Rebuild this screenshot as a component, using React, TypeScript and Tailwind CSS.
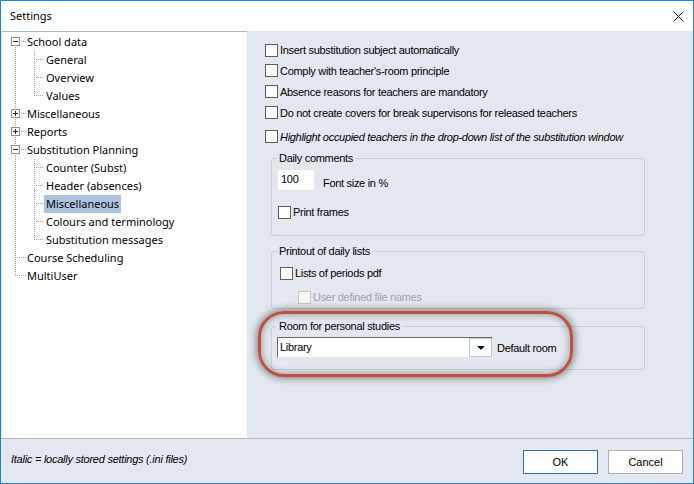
import React from "react";

type Row =
  | { kind: "root"; label: string; box?: "plus" | "minus"; first?: boolean; last?: boolean }
  | { kind: "child"; label: string; lastChild?: boolean; selected?: boolean };

const rows: Row[] = [
  { kind: "root", label: "School data", box: "minus", first: true },
  { kind: "child", label: "General" },
  { kind: "child", label: "Overview" },
  { kind: "child", label: "Values", lastChild: true },
  { kind: "root", label: "Miscellaneous", box: "plus" },
  { kind: "root", label: "Reports", box: "plus" },
  { kind: "root", label: "Substitution Planning", box: "minus" },
  { kind: "child", label: "Counter (Subst)" },
  { kind: "child", label: "Header (absences)" },
  { kind: "child", label: "Miscellaneous", selected: true },
  { kind: "child", label: "Colours and terminology" },
  { kind: "child", label: "Substitution messages", lastChild: true },
  { kind: "root", label: "Course Scheduling" },
  { kind: "root", label: "MultiUser", last: true },
];

const DOT = "#a0a0a0";

function VLine({ x, y1, y2 }: { x: number; y1: number; y2: number }) {
  return (
    <line x1={x} y1={y1} x2={x} y2={y2} stroke={DOT} strokeWidth={1} strokeDasharray="1 1" shapeRendering="crispEdges" />
  );
}
function HLine({ x1, x2, y }: { x1: number; x2: number; y: number }) {
  return (
    <line x1={x1} y1={y} x2={x2} y2={y} stroke={DOT} strokeWidth={1} strokeDasharray="1 1" shapeRendering="crispEdges" />
  );
}

function Gutter({ row }: { row: Row }) {
  if (row.kind === "child") {
    return (
      <svg width={42} height={18} className="shrink-0">
        <VLine x={13.5} y1={0} y2={18} />
        <VLine x={32.5} y1={0} y2={row.lastChild ? 9 : 18} />
        <HLine x1={34} x2={42} y={8.5} />
      </svg>
    );
  }
  if (row.box) {
    return (
      <svg width={24} height={18} className="shrink-0">
        {!row.first && <VLine x={13.5} y1={0} y2={4} />}
        <VLine x={13.5} y1={14} y2={18} />
        <rect x={9.5} y={4.5} width={8} height={8} fill="#ffffff" stroke="#919191" strokeWidth={1} shapeRendering="crispEdges" />
        <line x1={11} y1={8.5} x2={16} y2={8.5} stroke="#2b2b2b" strokeWidth={1} shapeRendering="crispEdges" />
        {row.box === "plus" && (
          <line x1={13.5} y1={6} x2={13.5} y2={11} stroke="#2b2b2b" strokeWidth={1} shapeRendering="crispEdges" />
        )}
        <HLine x1={19} x2={24} y={8.5} />
      </svg>
    );
  }
  return (
    <svg width={24} height={18} className="shrink-0">
      <VLine x={13.5} y1={0} y2={row.last ? 9 : 18} />
      <HLine x1={15} x2={24} y={8.5} />
    </svg>
  );
}

function Tree() {
  return (
    <div className="ml-[1px] w-[245px] bg-white border-t border-[#a9bbd1] pt-[1px] font-['Noto_Sans',sans-serif] text-[11px] text-black">
      {rows.map((r, i) => (
        <div key={i} className="flex h-[18px] items-center leading-[18px]">
          <Gutter row={r} />
          {r.kind === "child" ? (
            <span className={"px-[2px] whitespace-nowrap " + (r.selected ? "bg-[#adc3df]" : "")}>{r.label}</span>
          ) : (
            <span className="ml-[1px] whitespace-nowrap">{r.label}</span>
          )}
        </div>
      ))}
    </div>
  );
}

function Box({ disabled }: { disabled?: boolean }) {
  return (
    <span
      className={
        "inline-block w-[13px] h-[13px] shrink-0 border " +
        (disabled ? "border-[#c4c4c4] bg-[#f7f7f7]" : "border-[#5c5c5c] bg-white")
      }
    />
  );
}

function Check({ label, italic, disabled, className }: { label: string; italic?: boolean; disabled?: boolean; className?: string }) {
  return (
    <div className={"flex items-center gap-[2px] " + (className ?? "")}>
      <Box disabled={disabled} />
      <span className={"whitespace-nowrap leading-[14px] " + (italic ? "italic " : "") + (disabled ? "text-[#a2a2a2]" : "text-black")}>
        {label}
      </span>
    </div>
  );
}

function Group({ title, className, children }: { title: string; className?: string; children?: React.ReactNode }) {
  return (
    <div className={"relative ml-[24px] w-[374px] border border-[#c8ced8] rounded-[3px] " + (className ?? "")}>
      <span className="absolute -top-[7px] left-[5px] px-[2px] bg-[#e3e8f0] leading-[13px] whitespace-nowrap text-black">
        {title}
      </span>
      {children}
    </div>
  );
}

function RightPanel() {
  return (
    <div className="relative flex-1 flex flex-col pt-[9px] font-['Liberation_Sans',Arial,sans-serif] text-[11px] tracking-[-0.3px] text-black">
      <Check className="h-[20px] pl-[18px]" label="Insert substitution subject automatically" />
      <Check className="h-[21px] pl-[18px]" label="Comply with teacher's-room principle" />
      <Check className="h-[21px] pl-[18px]" label="Absence reasons for teachers are mandatory" />
      <Check className="h-[21px] pl-[18px]" label="Do not create covers for break supervisons for released teachers" />
      <Check className="h-[21px] pl-[18px] mt-[3px]" label="Highlight occupied teachers in the drop-down list of the substitution window" italic />

      <Group title="Daily comments" className="mt-[11px] h-[78px] pt-[10px] pl-[5px]">
        <div className="flex items-start">
          <div className="w-[38px] h-[22px] bg-white border border-[#e2e5ea] pl-[3px] pt-[2px] leading-[14px]">100</div>
          <span className="ml-[8px] mt-[7px] leading-[14px]">Font size in %</span>
        </div>
        <Check className="mt-[14px] ml-[1px]" label="Print frames" />
      </Group>

      <Group title="Printout of daily lists" className="mt-[15px] h-[58px] pt-[14px] pl-[8px]">
        <Check label="Lists of periods pdf" />
        <Check className="mt-[10px] ml-[18px]" label="User defined file names" disabled />
      </Group>

      <Group title="Room for personal studies" className="mt-[17px] h-[44px] pt-[10px] pl-[5px]">
        <div className="flex items-center">
          <div className="flex w-[216px] h-[21px] bg-white border-t border-l border-[#6a6a6a] border-r border-b border-r-[#e8e8e8] border-b-[#e8e8e8]">
            <span className="flex-1 pl-[2px] leading-[18px]">Library</span>
            <div className="w-[23px] h-full border border-[#b8c5da] bg-white flex items-center justify-center">
              <svg width={8} height={4}>
                <polygon points="0,0 8,0 4,4" fill="#111" />
              </svg>
            </div>
          </div>
          <span className="ml-[4px] leading-[14px]">Default room</span>
        </div>
      </Group>

      <div className="pointer-events-none absolute left-[11px] top-[280px] w-[315px] h-[66px] rounded-[26px] border-[3px] border-[#c0503d] shadow-[0_0_7px_2px_rgba(0,0,0,0.4),inset_0_0_7px_1px_rgba(0,0,0,0.3)]" />
    </div>
  );
}

export default function App() {
  return (
    <div className="w-[694px] h-[484px] border border-[#1c82d6] bg-[#e3e8f0] flex flex-col overflow-hidden">
      <div className="h-[30px] bg-white flex items-center justify-between pl-[9px] pr-[9px] font-['Noto_Sans',sans-serif] text-[11px] text-black shrink-0">
        <span className="leading-[14px]">Settings</span>
        <svg width={11} height={11}>
          <line x1={0.5} y1={0.5} x2={10.5} y2={10.5} stroke="#111" strokeWidth={1} />
          <line x1={10.5} y1={0.5} x2={0.5} y2={10.5} stroke="#111" strokeWidth={1} />
        </svg>
      </div>
      <div className="flex h-[407px] shrink-0">
        <Tree />
        <RightPanel />
      </div>
      <div className="h-px bg-[#a9bbd1] shrink-0" />
      <div className="flex-1 flex items-start pt-[11px] pl-[10px] pr-[10px] font-['Liberation_Sans',Arial,sans-serif] text-[11px] text-black">
        <span className="italic mt-[2px] leading-[14px] tracking-[-0.25px]">Italic = locally stored settings (.ini files)</span>
        <div className="ml-auto flex gap-[10px]">
          <div className="w-[75px] h-[24px] border border-[#2a6fb8] bg-[#fdfdfd] flex items-center justify-center">OK</div>
          <div className="w-[75px] h-[24px] border border-[#adadad] bg-[#fdfdfd] flex items-center justify-center">Cancel</div>
        </div>
      </div>
    </div>
  );
}
